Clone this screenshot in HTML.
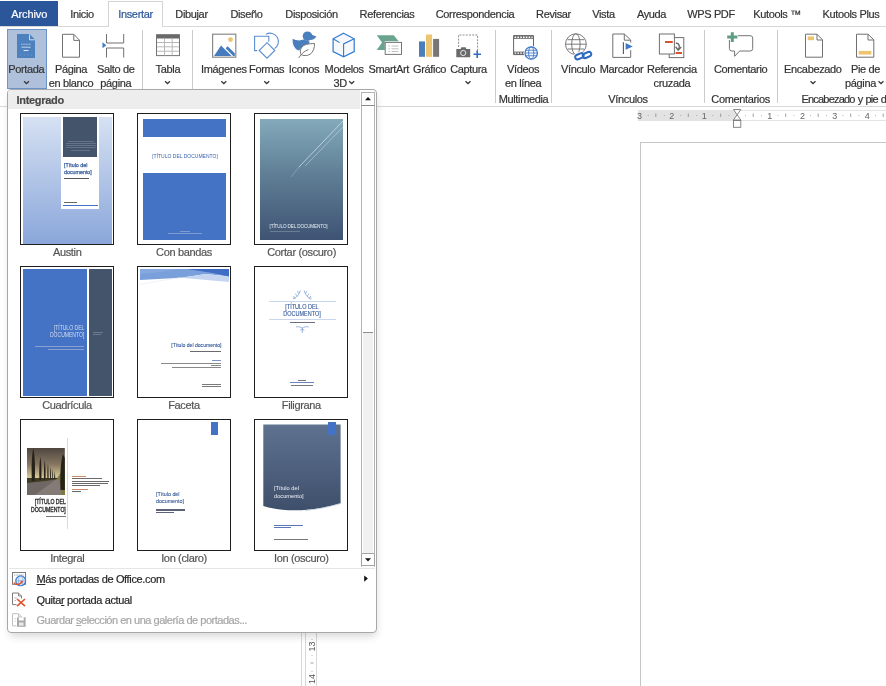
<!DOCTYPE html>
<html><head><meta charset="utf-8">
<style>
*{margin:0;padding:0;box-sizing:border-box}
html,body{width:886px;height:686px;overflow:hidden;background:#fff}
body{position:relative;font-family:"Liberation Sans",sans-serif;color:#444}
#root{position:absolute;left:0;top:0;width:886px;height:686px;overflow:hidden;background:#fff;will-change:transform}
.t,.tc,.lb{-webkit-text-stroke-width:0.2px}
.a{position:absolute}
.t{position:absolute;white-space:nowrap;font-size:11px;line-height:14px;letter-spacing:-0.35px;color:#333}
.tc{position:absolute;white-space:nowrap;font-size:11px;line-height:14px;letter-spacing:-0.35px;color:#333;transform:translateX(-50%);text-align:center}
.sep{position:absolute;width:1px;background:#cccccc;top:30px;height:73px}
svg{position:absolute;overflow:visible}
.chev{position:absolute;width:6px;height:4px}
</style></head><body><div id="root">

<!-- ===== TABS ===== -->
<div class="a" style="left:0;top:26px;width:886px;height:1px;background:#d8d8d8"></div>
<div class="a" style="left:0;top:1px;width:58px;height:25px;background:#2b579a"></div>
<div class="tc" style="left:29.2px;top:7px;color:#fff;letter-spacing:-0.1px">Archivo</div>
<div class="a" style="left:108px;top:1px;width:55px;height:26px;background:#fff;border:1px solid #d4d4d4;border-bottom:none"></div>
<div class="tc" style="left:82px;top:7px">Inicio</div>
<div class="tc" style="left:135.5px;top:7px;color:#2b579a">Insertar</div>
<div class="tc" style="left:191.5px;top:7px">Dibujar</div>
<div class="tc" style="left:246.5px;top:7px">Diseño</div>
<div class="tc" style="left:311.5px;top:7px">Disposición</div>
<div class="tc" style="left:387px;top:7px">Referencias</div>
<div class="tc" style="left:475px;top:7px">Correspondencia</div>
<div class="tc" style="left:553.5px;top:7px">Revisar</div>
<div class="tc" style="left:603.5px;top:7px">Vista</div>
<div class="tc" style="left:651.5px;top:7px">Ayuda</div>
<div class="tc" style="left:711px;top:7px">WPS PDF</div>
<div class="tc" style="left:777px;top:7px">Kutools ™</div>
<div class="tc" style="left:851px;top:7px">Kutools Plus</div>

<!-- ===== RIBBON ===== -->
<div class="a" style="left:0;top:106px;width:886px;height:1px;background:#d8d8d8"></div>
<div class="sep" style="left:142px"></div>
<div class="sep" style="left:192px"></div>
<div class="sep" style="left:495px"></div>
<div class="sep" style="left:551px"></div>
<div class="sep" style="left:704px"></div>
<div class="sep" style="left:777px"></div>

<!-- Portada highlighted -->
<div class="a" style="left:7px;top:29px;width:40px;height:60px;background:#afc0da;border:1px solid #6d94c9"></div>

<svg width="886" height="110" style="left:0;top:0" viewBox="0 0 886 110">
<!-- Portada -->
<path d="M17,34 H29.5 L35,39.5 V58 H17 Z" fill="#4d80bf"/>
<path d="M29.5,34.5 V39.8 H34.8" fill="none" stroke="#dfe7f2" stroke-width="0.9"/>
<path d="M21,44.2 H31" stroke="#b3c8e4" stroke-width="1.1" stroke-dasharray="1.1 0.5"/>
<path d="M21.5,47.2 H30.5" stroke="#c3d4ea" stroke-width="1"/>
<path d="M23.5,50.5 H28.5" stroke="#dde7f3" stroke-width="1.1"/>
<path d="M20,55 H32" stroke="#a9c0de" stroke-width="0.6" stroke-dasharray="0.8 3"/>
<!-- Pagina en blanco -->
<path d="M62.5,34.3 H73.8 L79.5,40.2 V57.2 H62.5 Z" fill="#fff" stroke="#707070" stroke-width="1"/>
<path d="M73.8,34.5 V40.4 H79.5" fill="none" stroke="#707070" stroke-width="1"/>
<!-- Salto de pagina -->
<path d="M106.5,34 V43 H123.7 V34 M106.5,57.5 V48 H123.7 V57.5" fill="none" stroke="#707070" stroke-width="1"/>
<path d="M102.5,42.3 L106.3,45.3 L102.5,48.3 Z" fill="#3f7bc6"/>
<!-- Tabla -->
<rect x="156.5" y="34.8" width="23" height="20.8" fill="#fff" stroke="#747474" stroke-width="1"/>
<rect x="156.5" y="34.5" width="23" height="4" fill="#6a6a6a"/>
<path d="M164.5,38.5 V55.5 M172.2,38.5 V55.5 M157,42.5 H179 M157,46.8 H179 M157,51.2 H179" stroke="#b8b8b8" stroke-width="1"/>
<!-- Imagenes -->
<rect x="212.6" y="34.2" width="23.2" height="23" fill="#fff" stroke="#8a8a8a" stroke-width="1.2"/>
<circle cx="230.5" cy="39.6" r="2.4" fill="#e9c36e"/>
<path d="M214,56 L221,45.6 L231.6,56 Z" fill="#467bbd"/>
<path d="M225.6,48.2 L227.6,46.3 L234.8,53.2 V56 H233.2 Z" fill="#467bbd"/>
<!-- Formas -->
<path d="M265.9,34.4 A7.8,7.8 0 1 1 274.5,48.6" fill="none" stroke="#5c8fd1" stroke-width="1.1"/>
<path d="M257.2,50.6 H254.6 V36.3 H268.8 V41.8" fill="none" stroke="#5c8fd1" stroke-width="1.1"/>
<path d="M267,42.7 L274.8,50.5 L267,58.2 L259.2,50.5 Z" fill="#fff" stroke="#5c8fd1" stroke-width="1.1"/>
<!-- Iconos -->
<path d="M292.6,38.7 C296,40.5 300,41 303.5,39.6 L309.5,41.5 L309,44 C305,44.5 301.5,46 300,49.5 L298.7,50.6 C294,48.5 292.4,44 292.6,38.7 Z" fill="#4a7ebc"/>
<circle cx="307.5" cy="36.2" r="4.8" fill="#4a7ebc"/>
<path d="M310.5,34.3 L316.4,36.4 C315,38.6 313,39.7 310.5,39.9 Z" fill="#4a7ebc"/>
<path d="M314.5,43.5 C309,43.5 303,44.5 301.2,48 C299.8,50.8 300.3,53.5 301,54.5 C303,56 307,56 310,54.3 C313.5,52 314.6,47.5 314.5,43.5 Z" fill="#fff" stroke="#767676" stroke-width="1"/>
<path d="M298.7,57.9 C301.5,53.5 304.5,51 308.4,49.6" fill="none" stroke="#767676" stroke-width="1"/>
<!-- Modelos 3D -->
<path d="M343.6,33.3 L354.2,38.8 V51.6 L343.6,56.8 L333.1,51.6 V38.8 Z" fill="#f6f8fb" stroke="#2f7ad0" stroke-width="1.2"/>
<path d="M354.2,38.8 L343.6,43.9 V56.8 M333.1,38.8 L339.6,42.6" fill="none" stroke="#2f7ad0" stroke-width="1.1"/>
<!-- SmartArt -->
<path d="M376.8,35.2 H393.8 L398.6,41.2 H384.8 V50 H376.8 L382,42.6 Z" fill="#6aa48e"/>
<rect x="385.2" y="42.4" width="16.3" height="12" fill="#fff" stroke="#767676" stroke-width="1"/>
<path d="M388.5,46 H390 M391.5,46 H398.5 M388.5,48.8 H390 M391.5,48.8 H398.5 M388.5,51.5 H390 M391.5,51.5 H398.5" stroke="#b0b0b0" stroke-width="0.8"/>
<!-- Grafico -->
<rect x="419" y="41.4" width="6" height="15.4" fill="#4a7ebc"/>
<rect x="426" y="34.5" width="6.1" height="22.3" fill="#edc46f"/>
<rect x="433.1" y="38.9" width="6" height="17.9" fill="#777"/>
<!-- Captura -->
<path d="M458.6,47 V35 H477.6 V51" fill="none" stroke="#8f8f8f" stroke-width="1" stroke-dasharray="2 1.2"/>
<path d="M456.3,49 H460.6 L461.4,47.3 H465.6 L466.4,49 H470.2 V57.3 H456.3 Z" fill="#6a6a6a"/>
<circle cx="463.2" cy="53" r="2.6" fill="#6a6a6a" stroke="#e4e4e4" stroke-width="1"/>
<path d="M473.5,54.2 H481 M477.2,50.6 V58" stroke="#2f6dc1" stroke-width="1.6"/>
<!-- Videos en linea -->
<path d="M533.5,47 V35.6 H513.6 V54.6 H524" fill="#fff" stroke="#666" stroke-width="1"/>
<rect x="513.6" y="35.6" width="19.9" height="3.2" fill="#666"/>
<rect x="513.6" y="51.6" width="11" height="3" fill="#666"/>
<path d="M514.6,37.2 H532.6" stroke="#fff" stroke-width="1.4" stroke-dasharray="1.6 1.2"/>
<path d="M514.6,53.1 H524" stroke="#fff" stroke-width="1.4" stroke-dasharray="1.6 1.2"/>
<circle cx="531.2" cy="53" r="7.3" fill="#fff"/>
<circle cx="531.2" cy="53" r="6.2" fill="#f4f8fd" stroke="#3f78c6" stroke-width="1.3"/>
<ellipse cx="531.2" cy="53" rx="2.6" ry="6.2" fill="none" stroke="#3f78c6" stroke-width="0.9"/>
<path d="M525.2,50.3 H537.2 M525,53 H537.4 M525.2,55.7 H537.2" stroke="#3f78c6" stroke-width="0.8"/>
<!-- Vinculo -->
<circle cx="575.9" cy="44.2" r="10.4" fill="#fff" stroke="#6c6c6c" stroke-width="0.9"/>
<ellipse cx="575.9" cy="44.2" rx="4.2" ry="10.4" fill="none" stroke="#6c6c6c" stroke-width="0.9"/>
<path d="M565.5,44.2 H586.3 M567.5,39.7 H584.3 M567.5,49 H584.3" stroke="#6c6c6c" stroke-width="0.9"/>
<rect x="-4.4" y="-2.3" width="8.8" height="4.6" rx="2.3" fill="none" stroke="#fff" stroke-width="3.6" transform="translate(579.4,56.3) rotate(-22)"/>
<rect x="-4.4" y="-2.3" width="8.8" height="4.6" rx="2.3" fill="none" stroke="#2e6cbf" stroke-width="2.1" transform="translate(579.4,56.3) rotate(-22)"/>
<rect x="-4.4" y="-2.3" width="8.8" height="4.6" rx="2.3" fill="none" stroke="#fff" stroke-width="3.6" stroke-dasharray="10 20" stroke-dashoffset="0" transform="translate(587,55) rotate(-22)"/>
<rect x="-4.4" y="-2.3" width="8.8" height="4.6" rx="2.3" fill="none" stroke="#2e6cbf" stroke-width="2.1" transform="translate(587,55) rotate(-22)"/>
<!-- Marcador -->
<path d="M630.7,42.6 V40 L624.3,34 H612.8 V57.4 H630.7 V50.2" fill="#fff" stroke="#707070" stroke-width="1"/>
<path d="M624.3,34.2 V40.2 H630.5" fill="none" stroke="#707070" stroke-width="1"/>
<path d="M623.4,42.3 V54" stroke="#555" stroke-width="1.1"/>
<path d="M625.6,43 L632.8,46.4 L625.6,49.8 Z" fill="#3f7bc6"/>
<!-- Referencia cruzada -->
<rect x="669.2" y="37.6" width="14.6" height="20" fill="#fff" stroke="#707070" stroke-width="1"/>
<rect x="659.4" y="34" width="15" height="20" fill="#fff" stroke="#707070" stroke-width="1"/>
<path d="M665,42 H672.8 M675.6,53 H682" stroke="#d9532b" stroke-width="2"/>
<path d="M675.8,43 C679.5,43.3 680.2,46.5 678.3,49.6" fill="none" stroke="#6a6a6a" stroke-width="1.4"/>
<path d="M675.6,46.8 L678.2,50.2 L681.2,47" fill="none" stroke="#6a6a6a" stroke-width="1.4"/>
<!-- Comentario -->
<path d="M738,35.7 H750.3 A2.4,2.4 0 0 1 752.7,38.1 V48.6 A2.4,2.4 0 0 1 750.3,51 H739.6 L734.6,56.3 V51 H731.8 A2.4,2.4 0 0 1 729.4,48.6 V40" fill="none" stroke="#747474" stroke-width="1"/>
<path d="M727.2,36.9 H737.4 M732.3,32.2 V41.9" stroke="#5f9e85" stroke-width="3"/>
<!-- Encabezado -->
<path d="M805.5,34.2 H817 L822.5,39.8 V57.2 H805.5 Z" fill="#fff" stroke="#707070" stroke-width="1"/>
<path d="M817,34.4 V40 H822.4" fill="none" stroke="#707070" stroke-width="1"/>
<rect x="807.7" y="36.4" width="6.3" height="3.8" fill="#eec56f"/>
<!-- Pie de pagina -->
<path d="M856.5,34.2 H868 L873.8,39.8 V57.2 H856.5 Z" fill="#fff" stroke="#707070" stroke-width="1"/>
<path d="M868,34.4 V40 H873.6" fill="none" stroke="#707070" stroke-width="1"/>
<rect x="858.7" y="50.9" width="12.7" height="3.7" fill="#eec56f"/>
<!-- chevrons -->
<g fill="none" stroke="#3a3a3a" stroke-width="1.3">
<path d="M24,81.3 L26.5,83.6 L29,81.3"/>
<path d="M165,81.3 L167.5,83.6 L170,81.3"/>
<path d="M221.3,81.3 L223.8,83.6 L226.3,81.3"/>
<path d="M264.2,81.3 L266.7,83.6 L269.2,81.3"/>
<path d="M349.2,81.3 L351.7,83.6 L354.2,81.3"/>
<path d="M465.5,81.3 L468,83.6 L470.5,81.3"/>
<path d="M810.5,81.3 L813,83.6 L815.5,81.3"/>
<path d="M878.5,81.3 L881,83.6 L883.5,81.3"/>
</g>
</svg>
<div class="tc" style="left:26.3px;top:62px">Portada</div>
<div class="tc" style="left:71px;top:62px">Página</div>
<div class="tc" style="left:71px;top:76px">en blanco</div>
<div class="tc" style="left:115.8px;top:62px">Salto de</div>
<div class="tc" style="left:115.8px;top:76px">página</div>
<div class="tc" style="left:167.9px;top:62px">Tabla</div>
<div class="tc" style="left:223.8px;top:62px">Imágenes</div>
<div class="tc" style="left:266.7px;top:62px">Formas</div>
<div class="tc" style="left:304px;top:62px">Iconos</div>
<div class="tc" style="left:344.2px;top:62px">Modelos</div>
<div class="t" style="left:333.5px;top:76px">3D</div>
<div class="tc" style="left:388.7px;top:62px">SmartArt</div>
<div class="tc" style="left:429.6px;top:62px">Gráfico</div>
<div class="tc" style="left:468.5px;top:62px">Captura</div>
<div class="tc" style="left:523.1px;top:62px">Vídeos</div>
<div class="tc" style="left:523.1px;top:76px">en línea</div>
<div class="tc" style="left:523.5px;top:92px">Multimedia</div>
<div class="tc" style="left:578.1px;top:62px">Vínculo</div>
<div class="tc" style="left:621.6px;top:62px">Marcador</div>
<div class="tc" style="left:671.9px;top:62px">Referencia</div>
<div class="tc" style="left:671.9px;top:76px">cruzada</div>
<div class="tc" style="left:628px;top:92px">Vínculos</div>
<div class="tc" style="left:740.6px;top:62px">Comentario</div>
<div class="tc" style="left:740.6px;top:92px">Comentarios</div>
<div class="tc" style="left:812.8px;top:62px">Encabezado</div>
<div class="tc" style="left:865.5px;top:62px">Pie de</div>
<div class="t" style="left:845px;top:76px">página</div>
<div class="t" style="left:801.5px;top:92px;letter-spacing:-0.8px;word-spacing:0.8px">Encabezado y pie de página</div>


<!-- ===== DOC AREA ===== -->
<div class="a" style="left:638px;top:110px;width:99px;height:11px;background:#e3e3e3"></div>
<div class="a" style="left:737px;top:110px;width:149px;height:11px;background:#fff;border-top:1px solid #e4e4e4;border-bottom:1px solid #e4e4e4"></div>
<svg width="886" height="686" style="left:0;top:0">
  <g fill="#666" font-family="Liberation Sans" font-size="9" text-anchor="middle">
    <text x="639.5" y="119">3</text><text x="671.8" y="119">2</text><text x="704.3" y="119">1</text>
    <text x="769.7" y="119">1</text><text x="802.4" y="119">2</text><text x="834.8" y="119">3</text><text x="867.3" y="119">4</text>
  </g>
  <g stroke="#8a8a8a" stroke-width="0.8">
    <path d="M647.8,115.5 h0.8 M663.8,115.5 h0.8 M680.3,115.5 h0.8 M696.3,115.5 h0.8 M712.5,115.5 h0.8 M728.5,115.5 h0.8 M745,115.5 h0.8 M761,115.5 h0.8 M777.5,115.5 h0.8 M793.5,115.5 h0.8 M810,115.5 h0.8 M826,115.5 h0.8 M842.5,115.5 h0.8 M858.5,115.5 h0.8 M875,115.5 h0.8"/>
    <path d="M655.8,113.5 v3.5 M688.3,113.5 v3.5 M720.7,113.5 v3.5 M753.2,113.5 v3.5 M785.7,113.5 v3.5 M818.2,113.5 v3.5 M850.7,113.5 v3.5 M883.2,113.5 v3.5"/>
  </g>
  <path d="M733.5,109.5 H740.8 L737.15,114.8 Z M733.5,120 H740.8 L737.15,114.8 Z" fill="#fff" stroke="#7a7a7a" stroke-width="0.9"/>
  <rect x="733.5" y="120.5" width="7.3" height="6.8" fill="#fff" stroke="#7a7a7a" stroke-width="0.9"/>
  <!-- vertical ruler -->
  <path d="M301.5,600 V686 M305.5,600 V686 M316.5,600 V686" stroke="#d8d8d8" stroke-width="1"/>
  <g fill="#555" font-family="Liberation Sans" font-size="9" text-anchor="middle">
    <text transform="translate(314.5,646.5) rotate(-90)">13</text>
    <text transform="translate(314.5,679) rotate(-90)">14</text>
  </g>
  <path d="M312,639 v0.8 M312,655 v0.8 M312,671 v0.8 M310.5,663 h3" stroke="#888" stroke-width="0.8"/>
</svg>
<div class="a" style="left:640px;top:142px;width:260px;height:600px;border:1px solid #c6c6c6;border-right:none;border-bottom:none"></div>


<!-- ===== PANEL ===== -->
<div class="a" style="left:7px;top:89px;width:370px;height:544px;background:#fff;border:1px solid #a8a8a8;border-radius:4px;box-shadow:1px 5px 8px -2px rgba(0,0,0,0.17)"></div>
<div class="a" style="left:8px;top:90px;width:352px;height:19px;background:#ededed;border-top-left-radius:2px"></div>
<div class="t" style="left:16.5px;top:92.5px;font-weight:bold;color:#4a4a4a;letter-spacing:-0.3px">Integrado</div>
<!-- scrollbar -->
<div class="a" style="left:361.3px;top:91.5px;width:13.4px;height:475px;border-left:1.5px solid #b4b4b4;border-right:1.5px solid #b4b4b4"></div>
<div class="a" style="left:361.3px;top:91.5px;width:13.4px;height:14.5px;background:#fff;border:1.2px solid #b4b4b4;border-bottom:1.6px solid #8a8a8a;border-radius:1px"></div>
<div class="a" style="left:362.8px;top:106px;width:10.4px;height:227px;background:#fff;border-bottom:1.3px solid #8e8e8e"></div>
<div class="a" style="left:362.8px;top:333.3px;width:10.4px;height:219.7px;background:#f1f1f1"></div>
<div class="a" style="left:361.3px;top:553px;width:13.4px;height:13px;background:#fff;border:1.2px solid #a4a4a4;border-radius:1px"></div>
<svg width="886" height="686" style="left:0;top:0">
<path d="M365,100.2 L368,97 L371,100.2 Z" fill="#111"/>
<path d="M365,558.3 L368,561.5 L371,558.3 Z" fill="#111"/>
<path d="M364.2,575.4 L367.9,578.6 L364.2,581.8 Z" fill="#111"/>
</svg>
<div class="a" style="left:9px;top:568px;width:366px;height:1px;background:#e6e6e6"></div>

<!-- thumbnails -->
<style>
.th{position:absolute;width:94px;height:132px;border:1px solid #1e1e1e;background:#fff;overflow:hidden}
.th div{position:absolute}
.lb{position:absolute;white-space:nowrap;font-size:11px;line-height:14px;letter-spacing:-0.35px;color:#555;transform:translateX(-50%)}
.tx{white-space:nowrap;letter-spacing:0}
</style>

<!-- Austin -->
<div class="th" style="left:20px;top:113px">
  <div style="left:1.5px;top:2.5px;width:89px;height:127px;background:linear-gradient(#d6e1f3,#8aa7da)"></div>
  <div style="left:40px;top:2.5px;width:37.5px;height:92.8px;background:#fff"></div>
  <div style="left:41.8px;top:2.5px;width:34.5px;height:40px;background:#44546a"></div>
  <div style="left:47px;top:26.5px;width:26px;height:0.7px;background:#66728a"></div>
  <div style="left:45px;top:28.8px;width:30px;height:0.7px;background:#66728a"></div>
  <div style="left:45px;top:31.1px;width:30px;height:0.7px;background:#66728a"></div>
  <div style="left:45px;top:33.4px;width:30px;height:0.7px;background:#66728a"></div>
  <div style="left:50px;top:35.7px;width:19px;height:0.7px;background:#66728a"></div>
  <div class="tx" style="left:43.2px;top:47.4px;font-size:6.2px;line-height:7px;color:#2f5597;-webkit-text-stroke:0.25px #2f5597;transform:scaleX(0.86);transform-origin:0 0">[Título del<br>documento]</div>
  <div style="left:43px;top:63.6px;width:25px;height:1.1px;background:#555"></div>
  <div style="left:43px;top:88.2px;width:13px;height:1.1px;background:#666"></div>
  <div style="left:42px;top:90.9px;width:35px;height:1.3px;background:#4472c4"></div>
</div>
<div class="lb" style="left:67.2px;top:245.3px">Austin</div>

<!-- Con bandas -->
<div class="th" style="left:137px;top:113px">
  <div style="left:4.8px;top:5.2px;width:83px;height:18px;background:#4472c4"></div>
  <div class="tx" style="left:0;top:39px;width:94px;text-align:center;font-size:5px;line-height:6px;color:#3b64b0">[TÍTULO DEL DOCUMENTO]</div>
  <div style="left:4.8px;top:59.3px;width:83px;height:66.5px;background:#4472c4"></div>
  <div style="left:42px;top:116.5px;width:10px;height:0.8px;background:#7f9bd0"></div>
  <div style="left:30px;top:119px;width:34px;height:0.8px;background:#7f9bd0"></div>
</div>
<div class="lb" style="left:184px;top:245.3px">Con bandas</div>

<!-- Cortar (oscuro) -->
<div class="th" style="left:254px;top:113px">
  <div style="left:4.8px;top:5.2px;width:83.6px;height:120.6px;background:linear-gradient(#83aaba,#607f96 45%,#3f5373);overflow:hidden">
    <svg width="84" height="121" style="left:0;top:0">
      <path d="M84,1 L39,48" stroke="#d3e2ec" stroke-width="0.9" opacity="0.85"/>
      <path d="M84,7 L45.3,46.8" stroke="#c9dbe8" stroke-width="0.8" opacity="0.7"/>
      <path d="M39,48 L31,58" stroke="#b9cfdf" stroke-width="0.7" opacity="0.5"/>
    </svg>
  </div>
  <div class="tx" style="left:14.5px;top:109.5px;font-size:4.6px;line-height:5px;color:#e8eef4;letter-spacing:-0.1px">[TÍTULO DEL DOCUMENTO]</div>
  <div style="left:14.5px;top:116.5px;width:30px;height:0.8px;background:#6b7d95"></div>
</div>
<div class="lb" style="left:301.6px;top:245.3px">Cortar (oscuro)</div>

<!-- Cuadricula -->
<div class="th" style="left:20px;top:266px">
  <div style="left:1.5px;top:1.5px;width:64.5px;height:127.5px;background:#4472c4"></div>
  <div style="left:67.8px;top:1.5px;width:23px;height:127.5px;background:#44546a"></div>
  <div class="tx" style="left:13px;top:57.4px;width:50.3px;text-align:right;font-size:7px;line-height:7px;color:#d3ddf1;transform:scaleX(0.72);transform-origin:100% 0">[TÍTULO DEL<br>DOCUMENTO]</div>
  <div style="left:14px;top:78.8px;width:49px;height:1px;background:#8aa0cf"></div>
  <div style="left:27px;top:81.5px;width:36px;height:0.9px;background:#8aa0cf"></div>
  <div style="left:71.5px;top:64.5px;width:10px;height:0.8px;background:#6f7b8c"></div>
  <div style="left:71.5px;top:66.8px;width:8px;height:0.8px;background:#6f7b8c"></div>
</div>
<div class="lb" style="left:67px;top:398.3px">Cuadrícula</div>

<!-- Faceta -->
<div class="th" style="left:137px;top:266px">
  <svg width="94" height="22" style="left:0;top:0">
    <path d="M2,2 H91 V9.5 L68,7 L43,10.7 L2,13 Z" fill="#7aa0dc"/>
    <path d="M43,10.7 L68,7 L91,9.5 V15 Z" fill="#c6d6f0"/>
    <path d="M49,2 H91 V9.5 C80,6.5 65,4.5 49,2 Z" fill="#3f6dc4"/>
    <path d="M2,2 H40 C28,4 15,6 2,7 Z" fill="#86a8df"/>
    <path d="M2,17.5 C18,14.5 32,12 43,10.7" fill="none" stroke="#e6edf7" stroke-width="0.7"/>
  </svg>
  <div class="tx" style="left:0;top:74.2px;width:83.5px;text-align:right;font-size:6.2px;line-height:7px;color:#2f5597;-webkit-text-stroke:0.12px #2f5597;transform:scaleX(0.82);transform-origin:100% 0">[Título del documento]</div>
  <div style="left:52px;top:84.3px;width:31px;height:1px;background:#6a6a6a"></div>
  <div style="left:74px;top:93.2px;width:9px;height:0.8px;background:#7d95c6"></div>
  <div style="left:23px;top:95.5px;width:60px;height:0.8px;background:#8a8a8a"></div>
  <div style="left:73px;top:97.6px;width:10px;height:0.8px;background:#8a8a8a"></div>
  <div style="left:33.5px;top:99.8px;width:49.5px;height:0.8px;background:#8a8a8a"></div>
  <div style="left:64px;top:116.6px;width:19px;height:0.9px;background:#7a7a7a"></div>
  <div style="left:64px;top:119.2px;width:19px;height:0.9px;background:#7a7a7a"></div>
</div>
<div class="lb" style="left:184px;top:398.3px">Faceta</div>

<!-- Filigrana -->
<div class="th" style="left:254px;top:266px">
  <svg width="94" height="70" style="left:0;top:0">
    <g fill="none" stroke="#7b9bd0" stroke-width="0.75">
      <path d="M45.3,23.4 C44.5,27 42,30 39,32"/>
      <path d="M49.1,23.4 C49.9,27 52.4,30 55.4,32"/>
      <path d="M44.3,26.5 C43,25.8 42.5,24.8 42.8,23.8 M42.6,29.2 C41.2,28.6 40.6,27.6 40.8,26.6 M40.5,31 C39.2,30.6 38.7,29.8 38.8,29 M50.1,26.5 C51.4,25.8 51.9,24.8 51.6,23.8 M51.8,29.2 C53.2,28.6 53.8,27.6 53.6,26.6 M53.9,31 C55.2,30.6 55.7,29.8 55.6,29"/>
      <path d="M39,32 C38.2,31.8 38,31 38.5,30.5 M55.4,32 C56.2,31.8 56.4,31 55.9,30.5"/>
    </g>
    <g fill="none" stroke="#7b9bd0" stroke-width="0.75">
      <path d="M41,60 C43,59.3 45.5,59.8 47.3,61.2 C49.1,59.8 51.6,59.3 53.6,60"/>
      <path d="M47.3,60.8 V66 M45.3,63.4 L47.3,62.2 L49.3,63.4"/>
    </g>
  </svg>
  <div style="left:13.5px;top:33.6px;width:67.5px;height:0.9px;background:#c8d7ee"></div>
  <div class="tx" style="left:0;top:35.5px;width:94px;text-align:center;font-size:6.4px;line-height:7.6px;color:#2f5597;-webkit-text-stroke:0.1px #2f5597;transform:scaleX(0.86);transform-origin:50% 0">[TÍTULO DEL<br>DOCUMENTO]</div>
  <div style="left:13.5px;top:51.5px;width:67.5px;height:0.9px;background:#c8d7ee"></div>
  <div style="left:35px;top:55px;width:24.5px;height:0.9px;background:#6a6f7c"></div>
  <div style="left:43px;top:113px;width:8px;height:0.8px;background:#777"></div>
  <div style="left:35px;top:115.3px;width:24px;height:0.8px;background:#6b84ba"></div>
  <div style="left:36px;top:117.6px;width:22px;height:0.8px;background:#777"></div>
</div>
<div class="lb" style="left:301.3px;top:398.3px">Filigrana</div>

<!-- Integral -->
<div class="th" style="left:20px;top:419px">
  <svg width="39" height="47" style="left:6.2px;top:27.8px;transform:scaleX(0.97);transform-origin:0 0">
    <defs><linearGradient id="sky" x1="0" y1="0" x2="0" y2="1">
      <stop offset="0" stop-color="#4f463f"/><stop offset="0.35" stop-color="#857660"/><stop offset="0.62" stop-color="#d6c898"/><stop offset="0.7" stop-color="#c9bc8c"/></linearGradient></defs>
    <rect width="39" height="47" fill="url(#sky)"/>
    <path d="M0,30 H39 V35 H0 Z" fill="#3e3b22"/>
    <path d="M0,35 C12,34 26,32 39,30 V47 H0 Z" fill="#6f6764"/>
    <path d="M8,47 C18,40 26,34 31,31 L35,31 C35,36 36,42 37,47 Z" fill="#847b77"/>
    <path d="M31,30 L39,19 V47 H36 C35,40 34,34 31,30 Z" fill="#7c7a3d"/>
    <g fill="#27231a">
      <path d="M6.5,0.5 C4.6,8 4.5,22 5,33 H8 C8.5,22 8.4,8 6.5,0.5 Z"/>
      <path d="M13.8,9 C12.6,15 12.5,25 12.8,32 H14.8 C15.1,25 15,15 13.8,9 Z"/>
      <path d="M18.3,12.5 C17.4,18 17.3,26 17.5,31.5 H19.1 C19.3,26 19.2,18 18.3,12.5 Z"/>
      <path d="M21.6,16 C21,20 20.9,26 21,31 H22.2 C22.3,26 22.2,20 21.6,16 Z"/>
      <path d="M24.2,19 C23.7,22 23.7,27 23.8,31 H24.7 C24.8,27 24.7,22 24.2,19 Z"/>
      <path d="M26.4,21 C26,24 26,28 26.1,31 H26.8 C26.9,28 26.8,24 26.4,21 Z"/>
      <path d="M28.5,23 L27.8,31 H29.2 Z"/>
      <path d="M37,6 C34.5,14 34,28 34.5,42 H39 V10 Z"/>
    </g>
  </svg>
  <div style="left:46.3px;top:17.5px;width:0.9px;height:91px;background:#f6d2b8"></div>
  <div class="tx" style="left:0;top:77.6px;width:44.8px;text-align:right;font-size:6.4px;line-height:8.6px;color:#1f1f1f;-webkit-text-stroke:0.3px #1f1f1f;transform:scaleX(0.8);transform-origin:100% 0">[TÍTULO DEL<br>DOCUMENTO]</div>
  <div style="left:24.7px;top:96.3px;width:20px;height:1px;background:#777"></div>
  <div style="left:51px;top:55.6px;width:14px;height:1px;background:#c98a66"></div>
  <div style="left:51px;top:58.3px;width:30px;height:0.9px;background:#6a6a6a"></div>
  <div style="left:51px;top:60.6px;width:37px;height:0.9px;background:#6a6a6a"></div>
  <div style="left:51px;top:62.9px;width:36px;height:0.9px;background:#6a6a6a"></div>
  <div style="left:51px;top:65.2px;width:28px;height:0.9px;background:#6a6a6a"></div>
  <div style="left:51px;top:68.8px;width:16px;height:1px;background:#c98a66"></div>
  <div style="left:51px;top:71.1px;width:9px;height:0.9px;background:#6a6a6a"></div>
</div>
<div class="lb" style="left:67.3px;top:550.6px">Integral</div>

<!-- Ion (claro) -->
<div class="th" style="left:137px;top:419px">
  <div style="left:72.5px;top:1.5px;width:7.5px;height:13.5px;background:#4472c4"></div>
  <div class="tx" style="left:17.8px;top:70px;font-size:6.1px;line-height:7px;color:#2f5597;-webkit-text-stroke:0.1px #2f5597;transform:scaleX(0.88);transform-origin:0 0">[Título del<br>documento]</div>
  <div style="left:17.5px;top:89.4px;width:29px;height:1.2px;background:#5c6378"></div>
  <div style="left:17.5px;top:92.2px;width:18px;height:1.2px;background:#5c6378"></div>
</div>
<div class="lb" style="left:184px;top:550.6px">Ion (claro)</div>

<!-- Ion (oscuro) -->
<div class="th" style="left:254px;top:419px">
  <svg width="94" height="100" style="left:0;top:0">
    <defs><linearGradient id="io" x1="0" y1="0" x2="0" y2="1"><stop offset="0" stop-color="#5e7290"/><stop offset="1" stop-color="#3e4f6b"/></linearGradient></defs>
    <path d="M8.3,4.5 H85.6 V83.5 C60,91 30,93 8.3,86 Z" fill="url(#io)"/>
    <path d="M50,90.5 C62,89.5 74,87 85.6,83.5" fill="none" stroke="#c8d2df" stroke-width="0.9"/>
  </svg>
  <div style="left:73px;top:1.5px;width:7.5px;height:13.5px;background:#4472c4"></div>
  <div class="tx" style="left:19.3px;top:63.6px;font-size:6.1px;line-height:8px;color:#f0f3f8;transform:scaleX(0.93);transform-origin:0 0">[Título del<br>documento]</div>
  <div style="left:18.5px;top:105px;width:29px;height:0.8px;background:#5a78b5"></div>
  <div style="left:18.5px;top:107.3px;width:17px;height:0.8px;background:#5a78b5"></div>
  <div style="left:18.5px;top:119px;width:34px;height:0.8px;background:#777"></div>
</div>
<div class="lb" style="left:301.3px;top:550.6px">Ion (oscuro)</div>

<!-- menu items -->
<div class="t" style="left:36.5px;top:572px;color:#262626"><u>M</u>ás portadas de Office.com</div>
<div class="t" style="left:36.5px;top:592.5px;color:#262626">Quita<u>r</u> portada actual</div>
<div class="t" style="left:36.5px;top:613px;color:#a6a6a6;letter-spacing:-0.48px">Guardar <u>s</u>elección en una galería de portadas...</div>
<svg width="886" height="686" style="left:0;top:0">
  <!-- Mas portadas icon -->
  <rect x="12.5" y="572.5" width="13" height="11.8" fill="#fff" stroke="#7a7a7a" stroke-width="1"/>
  <path d="M14,575 H24" stroke="#9a9a9a" stroke-width="1" stroke-dasharray="1 0.7"/>
  <circle cx="20.7" cy="580.8" r="4.9" fill="#e3ecf8" stroke="#3a78cc" stroke-width="1.3"/>
  <path d="M15.8,580.8 H25.6" stroke="#7ea6de" stroke-width="0.7"/>
  <ellipse cx="20.7" cy="580.8" rx="2.2" ry="4.9" fill="none" stroke="#7ea6de" stroke-width="0.7"/>
  <path d="M14,582.5 C15,585 18.5,585.5 21.8,582.2" fill="none" stroke="#e0512c" stroke-width="1.5"/>
  <path d="M20.3,580.6 L23.2,581.2 L21.5,583.8 Z" fill="#e0512c"/>
  <!-- Quitar icon -->
  <path d="M12.5,593 H18.5 L21.5,596 V598.5 M12.5,593 V604.6 H16.5" fill="none" stroke="#6f6f6f" stroke-width="0.9"/>
  <path d="M18.5,593.2 V596 H21.3" fill="none" stroke="#6f6f6f" stroke-width="0.8"/>
  <path d="M14.5,598 H17 M14.5,600.5 H16" stroke="#aaa" stroke-width="0.8"/>
  <path d="M17,599 L25,606.2 M25,599 L17,606.2" stroke="#e0512c" stroke-width="1.6"/>
  <!-- Guardar icon (disabled) -->
  <path d="M12.5,613.7 H18.5 L21.5,616.7 V617.5 M12.5,613.7 V625.9 H16.5" fill="none" stroke="#b9b9b9" stroke-width="0.9"/>
  <path d="M18.5,613.9 V616.7 H21.3" fill="none" stroke="#b9b9b9" stroke-width="0.8"/>
  <path d="M14.5,618.5 H16 M14.5,621 H16" stroke="#ccc" stroke-width="0.8"/>
  <rect x="17" y="617.3" width="8.6" height="9.5" fill="#a8a8a8"/>
  <rect x="18.8" y="617.3" width="5" height="3.2" fill="#fff"/>
  <rect x="19" y="622.5" width="4.6" height="3.2" fill="#e8e8e8"/>
</svg>
</div></body></html>
